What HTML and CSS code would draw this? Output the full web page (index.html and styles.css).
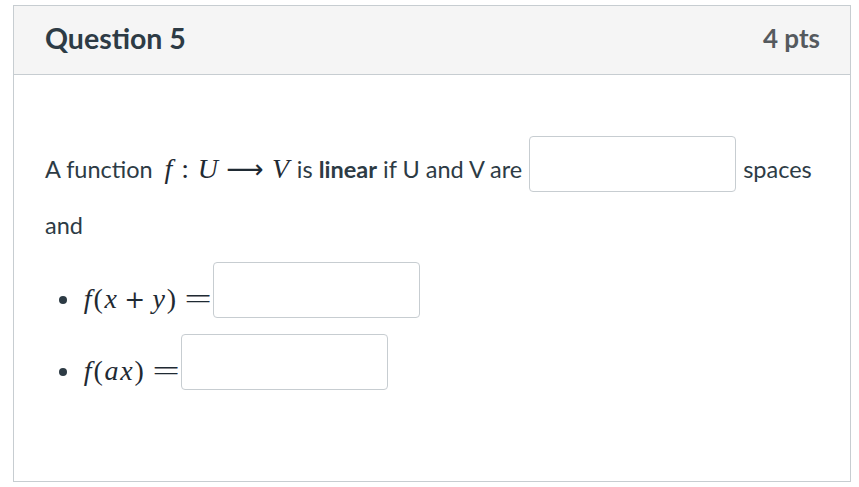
FILE: index.html
```html
<!DOCTYPE html>
<html>
<head>
<meta charset="utf-8">
<link rel="stylesheet" href="styles.css">
</head>
<body>
<div class="question">
  <div class="header">
    <h2 class="title">Question 5</h2>
    <div class="pts">4 pts</div>
  </div>
  <div class="body">
    <p class="text">A function <span class="math inline"><i>f</i><span class="rel">:</span><i>U</i><span class="rel arrow">&#x27F6;</span><i>V</i></span> is <b>linear</b> if U and V are <input class="blank" type="text"> spaces and</p>
    <ul class="items">
      <li class="item"><div class="row"><span class="math"><i>f</i>(<i>x</i><span class="bin">+</span><i>y</i>)<span class="rel eq">=</span></span><input class="blank" type="text"></div></li>
      <li class="item"><div class="row"><span class="math"><i>f</i>(<i class="tight">a</i><i>x</i>)<span class="rel eq">=</span></span><input class="blank" type="text"></div></li>
    </ul>
  </div>
</div>
</body>
</html>
```
FILE: styles.css
```css
body {
  margin: 0;
  background: #ffffff;
  font-family: Lato, "Open Sans", sans-serif;
  color: #2d3b45;
}
.question {
  margin: 5px 0 0 13px;
  width: 838px;
  height: 477px;
  border: 1px solid #c7cdd1;
  box-sizing: border-box;
}
.header {
  display: flex;
  align-items: center;
  justify-content: space-between;
  height: 69px;
  box-sizing: border-box;
  background: #f5f5f5;
  border-bottom: 1px solid #c7cdd1;
  padding: 0 30px 5px 31px;
}
.title {
  margin: 0;
  font-size: 28.5px;
  font-weight: 700;
  color: #2d3b45;
}
.pts {
  font-size: 26px;
  font-weight: 700;
  color: #555a5e;
}
.body {
  padding: 61px 31px 0 31px;
}
.text {
  margin: 0;
  font-size: 23.5px;
  line-height: 56px;
}
.math {
  font-family: "Liberation Serif", "DejaVu Serif", serif;
  font-size: 28px;
  line-height: 1;
  white-space: nowrap;
  color: #1f2a33;
}
.math.inline {
  margin-left: 4px;
}
.math i {
  margin: 0 0.065em;
}
.math i.tight {
  margin-right: 0;
}
.rel {
  font-style: normal;
  margin: 0 0.25em;
}
.bin {
  font-family: "DejaVu Serif", serif;
  font-size: 25px;
  font-style: normal;
  margin: 0 0.22em;
}
.eq {
  display: inline-block;
  width: 26px;
  text-align: center;
  transform: scaleX(1.75);
}
.arrow {
  font-family: "DejaVu Sans", sans-serif;
  font-size: 26px;
}
.blank {
  width: 207px;
  height: 56px;
  box-sizing: border-box;
  border: 1px solid #c7cdd1;
  border-radius: 4px;
  vertical-align: 7px;
  margin: 0 1px;
  padding: 0 8px;
  font-family: Lato, sans-serif;
  font-size: 16px;
  background: #ffffff;
}
.items {
  margin: 9px 0 0 0;
  padding: 0 0 0 37px;
  font-size: 24px;
}
.item {
  margin-bottom: 16px;
}
.row {
  display: flex;
  align-items: center;
  height: 56px;
}
.row .math {
  padding-top: 18px;
}
.row .rel {
  margin: 0 2px 0 9px;
}
.row .blank {
  margin: 0;
}
```
